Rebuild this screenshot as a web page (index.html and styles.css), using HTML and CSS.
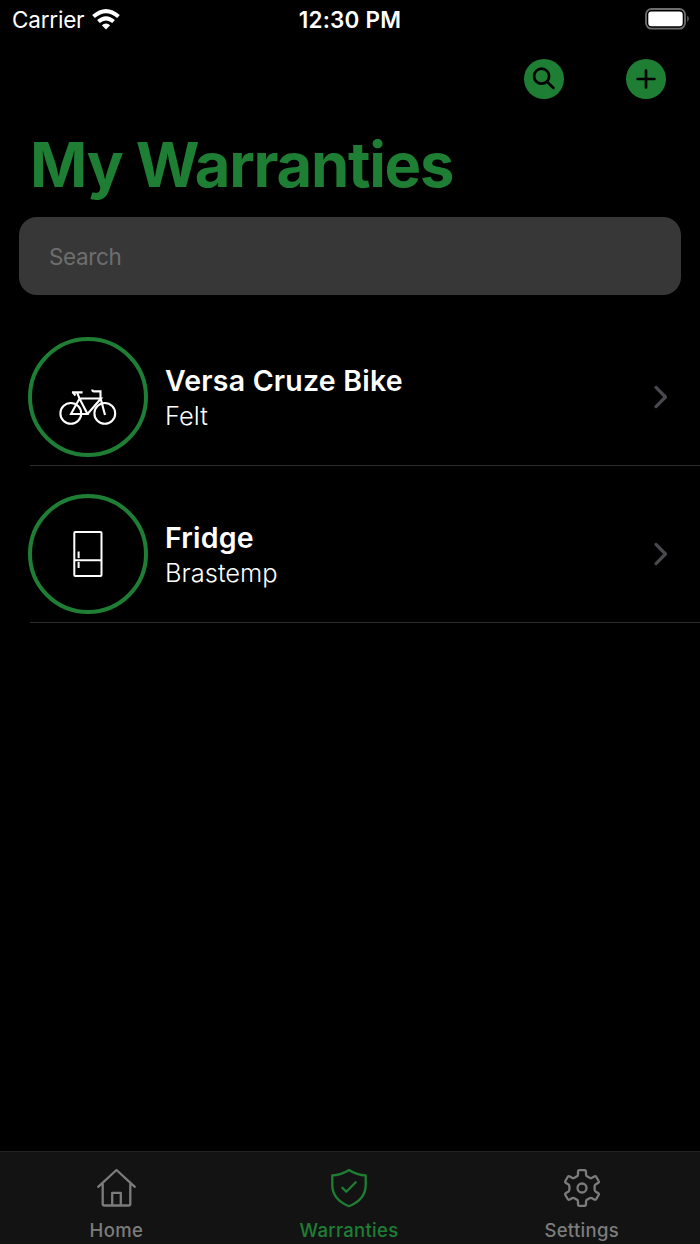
FILE: index.html
```html
<!DOCTYPE html>
<html>
<head>
    <meta charset="utf-8">
    <title>My Warranties</title>
    <link rel="stylesheet" href="styles.css">
</head>
<body>
    <div class="screen">
        <div class="status-bar">
            <div class="carrier">
                <span>Carrier</span>
                <svg class="wifi" width="28" height="21" viewBox="0 0 28 21">
                    <path d="M14 20.6 L9.8 16.2 Q14 12.6 18.2 16.2 Z" fill="#fff"/>
                    <path d="M6.4 12.6 Q14 6 21.6 12.6" fill="none" stroke="#fff" stroke-width="4"/>
                    <path d="M1.5 7.6 Q14 -3.4 26.5 7.6" fill="none" stroke="#fff" stroke-width="4"/>
                </svg>
            </div>
            <div class="time">12:30 PM</div>
            <div class="battery">
                <svg width="45" height="22" viewBox="0 0 45 22">
                    <rect x="1" y="1" width="39" height="19.6" rx="5.5" fill="none" stroke="#6e6e6e" stroke-width="1.8"/>
                    <rect x="3.3" y="3.4" width="34.4" height="14.8" rx="3.2" fill="#fff"/>
                    <path d="M42.3 7.6 Q45.3 10.8 42.3 14 Z" fill="#6e6e6e"/>
                </svg>
            </div>
        </div>

        <div class="actions">
            <button class="round-button">
                <svg width="40" height="40" viewBox="0 0 40 40">
                    <circle cx="17.6" cy="17.2" r="7.5"/>
                    <path d="M23 22.6 L29.4 29"/>
                </svg>
            </button>
            <button class="round-button">
                <svg width="40" height="40" viewBox="0 0 40 40">
                    <path d="M20 11.6 V28.4 M11.6 20 H28.4"/>
                </svg>
            </button>
        </div>

        <h1>My Warranties</h1>

        <input class="search" type="text" placeholder="Search">

        <div class="list">
            <div class="item">
                <div class="circle">
                    <svg width="120" height="120" viewBox="0 0 120 120">
                        <g fill="none" stroke="#fff" stroke-width="2.1">
                            <circle cx="42.8" cy="76.4" r="10.4"/>
                            <circle cx="76.8" cy="76.4" r="10.4"/>
                            <path d="M44 55.4 H54.6 M49 55.4 L51.5 61.5 L59.5 77 H43 L51.5 61.5 H73 L59.5 77 M44.5 55 L47.5 58.5"/>
                            <path d="M77 78 L72.5 61 V54.4 H66 Q64.3 54.4 64.3 52.4"/>
                        </g>
                    </svg>
                </div>
                <div class="info">
                    <div class="name">Versa Cruze Bike</div>
                    <div class="brand">Felt</div>
                </div>
                <svg class="arrow" width="16" height="24" viewBox="0 0 16 24">
                    <path d="M3 2.4 L12.5 12 L3 21.6"/>
                </svg>
            </div>
            <div class="item">
                <div class="circle">
                    <svg width="120" height="120" viewBox="0 0 120 120">
                        <g fill="none" stroke="#fff" stroke-width="2">
                            <rect x="46.3" y="38.1" width="27.2" height="44" rx="1"/>
                            <path d="M46.5 66.3 H73.5 M50.6 57.5 V64 M50.6 68 V74"/>
                        </g>
                    </svg>
                </div>
                <div class="info">
                    <div class="name">Fridge</div>
                    <div class="brand">Brastemp</div>
                </div>
                <svg class="arrow" width="16" height="24" viewBox="0 0 16 24">
                    <path d="M3 2.4 L12.5 12 L3 21.6"/>
                </svg>
            </div>
        </div>

        <div class="tab-bar">
            <div class="tab">
                <svg width="42" height="42" viewBox="-21 -21 42 42">
                    <path d="M-17.8 -1.2 L0.5 -18 L18.8 -1.2 M-13.3 -4 V16 Q-13.3 17.5 -11.5 17.5 H12.5 Q14.3 17.5 14.3 16 V-4 M-3.8 17 V4.8 H4.8 V17"/>
                </svg>
                <span>Home</span>
            </div>
            <div class="tab active">
                <svg width="42" height="42" viewBox="-21 -21 42 42">
                    <path d="M0 -18 Q-8 -12.7 -16.7 -12.7 V-3 C-16.7 7 -11 13.8 0 18.2 C11 13.8 16.7 7 16.7 -3 V-12.7 Q8 -12.7 0 -18 Z"/>
                    <path d="M-6.7 -0.3 L-2.7 3.7 L6.7 -5.7"/>
                </svg>
                <span>Warranties</span>
            </div>
            <div class="tab">
                <svg width="42" height="42" viewBox="-21 -21 42 42">
                    <path d="M-2.5 -17.8 H2.5 Q4 -17.8 4 -16 V-13.5 Q4 -12 5.5 -11.4 L7.6 -10.2 Q8.8 -9.5 10 -10.2 L12.2 -11.5 Q13.6 -12.2 14.3 -11 L16.6 -7 Q17.3 -5.8 16 -5 L13.8 -3.7 Q12.6 -3 12.6 -1.6 V1.6 Q12.6 3 13.8 3.7 L16 5 Q17.3 5.8 16.6 7 L14.3 11 Q13.6 12.2 12.2 11.5 L10 10.2 Q8.8 9.5 7.6 10.2 L5.5 11.4 Q4 12 4 13.5 V16 Q4 17.8 2.5 17.8 H-2.5 Q-4 17.8 -4 16 V13.5 Q-4 12 -5.5 11.4 L-7.6 10.2 Q-8.8 9.5 -10 10.2 L-12.2 11.5 Q-13.6 12.2 -14.3 11 L-16.6 7 Q-17.3 5.8 -16 5 L-13.8 3.7 Q-12.6 3 -12.6 1.6 V-1.6 Q-12.6 -3 -13.8 -3.7 L-16 -5 Q-17.3 -5.8 -16.6 -7 L-14.3 -11 Q-13.6 -12.2 -12.2 -11.5 L-10 -10.2 Q-8.8 -9.5 -7.6 -10.2 L-5.5 -11.4 Q-4 -12 -4 -13.5 V-16 Q-4 -17.8 -2.5 -17.8 Z"/>
                    <circle cx="0" cy="0" r="4.5"/>
                </svg>
                <span>Settings</span>
            </div>
        </div>
    </div>
</body>
</html>
```
FILE: styles.css
```css
body {
    margin: 0;
    background-color: #000;
    color: #fff;
    font-family: Inter, "Liberation Sans", sans-serif;
}

.screen {
    width: 700px;
    height: 1244px;
    display: flex;
    flex-direction: column;
    overflow: hidden;
}

.status-bar {
    display: grid;
    grid-template-columns: 1fr auto 1fr;
    align-items: center;
    height: 38px;
    padding: 0 10px 0 12px;
    font-size: 22.5px;
}

.carrier {
    display: flex;
    align-items: center;
    gap: 8px;
    letter-spacing: -0.2px;
}

.time {
    margin-left: -2px;
    font-weight: 600;
    letter-spacing: 0.2px;
}

.battery {
    display: flex;
    justify-content: flex-end;
}

.actions {
    display: flex;
    justify-content: flex-end;
    gap: 62px;
    padding: 21px 34px 0 0;
}

.round-button {
    width: 40px;
    height: 40px;
    padding: 0;
    border: none;
    border-radius: 50%;
    background-color: #1e7e34;
}

.round-button svg {
    display: block;
    fill: none;
    stroke: #000;
    stroke-width: 2.7;
    stroke-linecap: round;
}

h1 {
    margin: 28px 0 0 30px;
    color: #1e7e34;
    font-size: 61.5px;
    line-height: 76px;
    font-weight: 700;
    letter-spacing: -1.25px;
}

.search {
    box-sizing: border-box;
    width: 662px;
    height: 78px;
    margin: 14px 0 0 19px;
    padding: 0 30px;
    border: none;
    border-radius: 18px;
    background-color: #373737;
    color: #fff;
    font-family: inherit;
    font-size: 22.5px;
    letter-spacing: -0.35px;
}

.search::placeholder {
    color: #6e6e6e;
}

.list {
    flex: 1;
    margin: 14px 0 0 30px;
}

.item {
    box-sizing: border-box;
    display: flex;
    align-items: center;
    height: 157px;
    padding: 20px 31px 0 0;
    border-bottom: 1px solid #2c2c2e;
}

.circle {
    box-sizing: border-box;
    width: 120px;
    height: 120px;
    margin-left: -2px;
    border: 4px solid #1e7e34;
    border-radius: 50%;
}

.circle svg {
    display: block;
    margin: -4px;
}

.info {
    flex: 1;
    padding: 2px 0 0 17px;
}

.name {
    font-size: 28.5px;
    line-height: 35px;
    font-weight: 600;
    letter-spacing: 0.2px;
}

.brand {
    font-size: 25.5px;
    line-height: 35px;
    font-weight: 300;
}

.arrow {
    fill: none;
    stroke: #4a4a4e;
    stroke-width: 3.2;
    stroke-linecap: round;
    stroke-linejoin: round;
}

.tab-bar {
    box-sizing: border-box;
    display: flex;
    height: 93px;
    padding-top: 15px;
    border-top: 1px solid #222;
    background-color: #131313;
}

.tab {
    display: flex;
    flex-direction: column;
    align-items: center;
    width: 232.7px;
    gap: 10px;
    color: #7c7c7c;
    font-size: 18.5px;
    line-height: 22px;
    font-weight: 500;
    letter-spacing: 0.3px;
}

.tab svg {
    fill: none;
    stroke: currentColor;
    stroke-width: 2.3;
    stroke-linecap: round;
    stroke-linejoin: round;
}

.tab.active {
    color: #1e7e34;
}
```
